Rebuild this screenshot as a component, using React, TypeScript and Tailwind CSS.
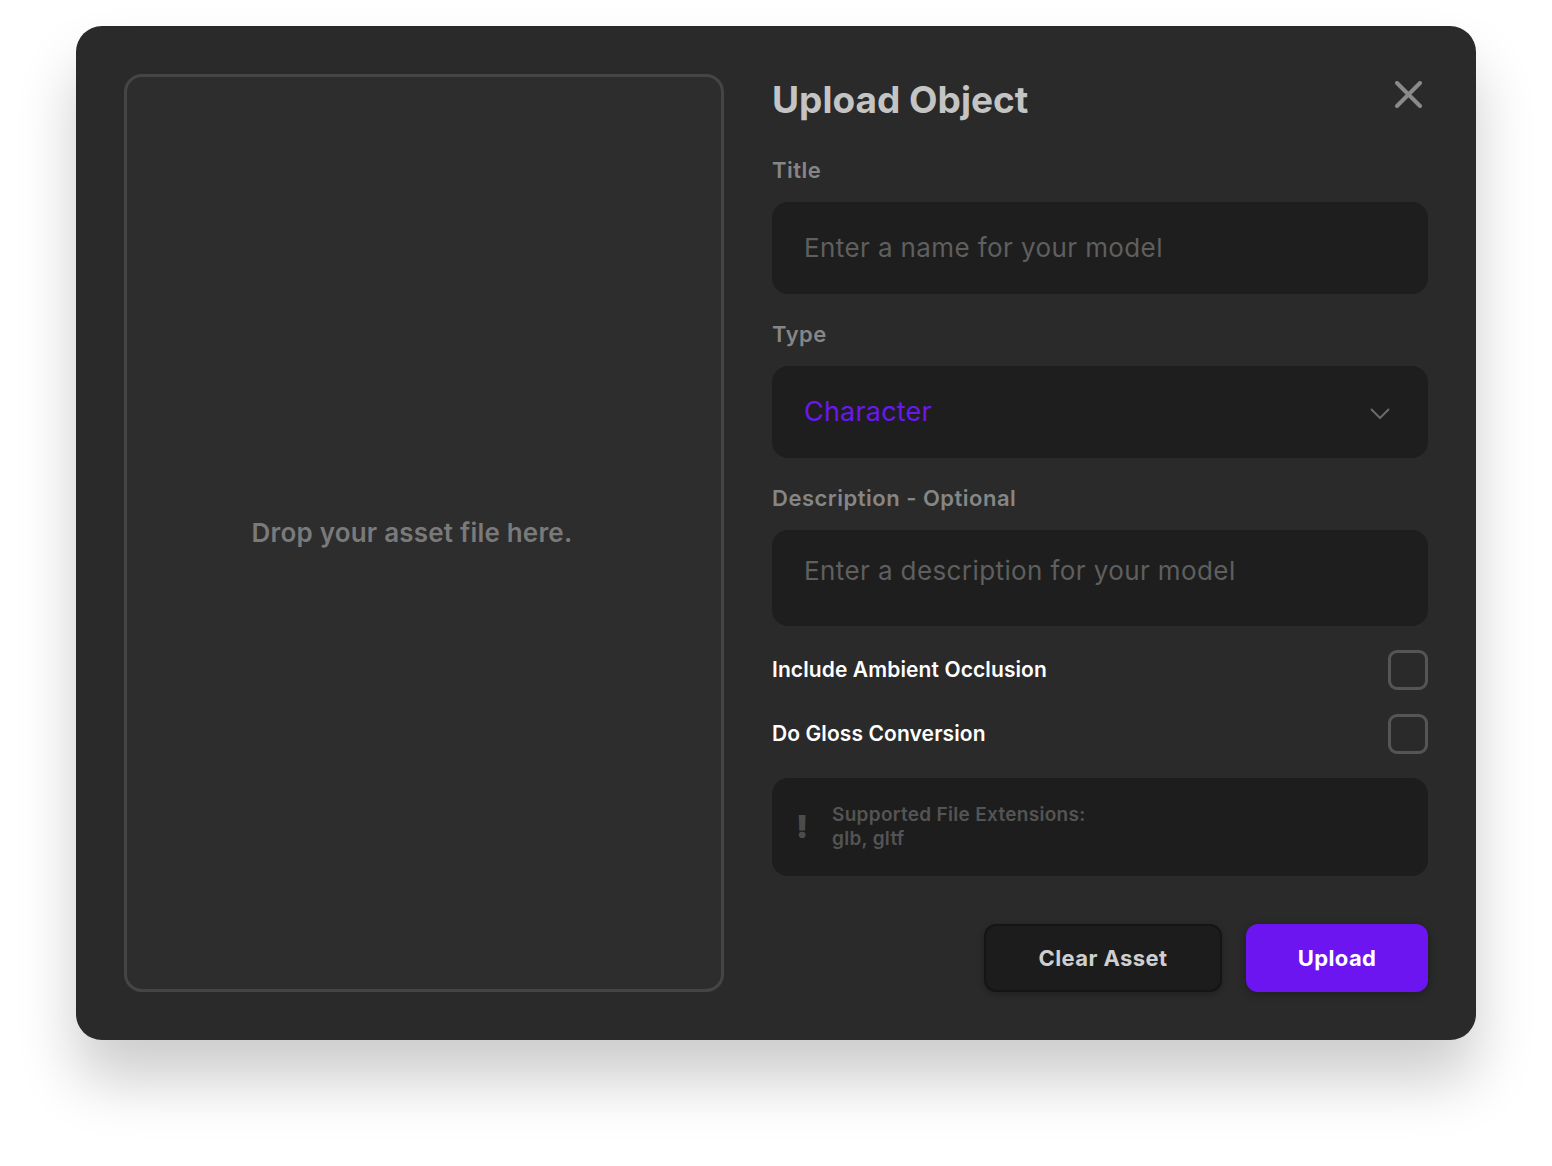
import * as React from "react"

const FONT = "font-['Inter','Lato','Liberation_Sans',sans-serif]"

function Checkbox({ label }: { label: string }) {
  const [checked, setChecked] = React.useState(false)
  return (
    <label className="flex h-10 cursor-pointer items-center justify-between">
      <span className="text-[21px] leading-[28px] font-semibold tracking-[0.1px] text-white">
        {label}
      </span>
      <button
        type="button"
        onClick={() => setChecked((v) => !v)}
        aria-pressed={checked}
        className="size-10 rounded-[9px] border-[3px] border-[#555555] bg-transparent"
      />
    </label>
  )
}

export default function App() {
  return (
    <div className={`min-h-[1166px] bg-white px-[76px] pt-[26px] ${FONT}`}>
      <div className="flex gap-12 rounded-[26px] bg-[#2a2a2a] p-12 shadow-[0_40px_60px_rgba(0,0,0,0.2)]">
        {/* drop zone */}
        <div className="flex h-[918px] w-[600px] shrink-0 items-center justify-center rounded-[18px] border-[3px] border-[#454545] bg-[#2d2d2d] pr-6">
          <span className="text-[26px] leading-[32px] font-semibold tracking-[0.2px] text-[#7a7a7a]">
            Drop your asset file here.
          </span>
        </div>

        {/* form */}
        <div className="flex w-[656px] flex-col">
          <div className="flex items-start justify-between">
            <h1 className="text-[37px] leading-[52px] font-bold text-[#c4c4c4]">
              Upload Object
            </h1>
            <button type="button" className="mt-[7px] mr-[6px] text-[#8a8a8a]" aria-label="Close">
              <svg width="27" height="27" viewBox="0 0 27 27" fill="none">
                <path
                  d="M2 2L25 25M25 2L2 25"
                  stroke="currentColor"
                  strokeWidth="4"
                  strokeLinecap="round"
                />
              </svg>
            </button>
          </div>

          <label className="mt-[30px] text-[22px] leading-[28px] font-semibold tracking-[0.5px] text-[#868686]">
            Title
          </label>
          <div className="mt-[18px] flex h-[92px] items-center rounded-[16px] bg-[#1e1e1e] px-8">
            <span className="text-[26px] leading-[32px] tracking-[0.4px] text-[#5f5f5f]">
              Enter a name for your model
            </span>
          </div>

          <label className="mt-[26px] text-[22px] leading-[28px] font-semibold tracking-[0.5px] text-[#868686]">
            Type
          </label>
          <div className="mt-[18px] flex h-[92px] items-center justify-between rounded-[16px] bg-[#1e1e1e] pr-[38px] pl-8">
            <span className="text-[27px] leading-[34px] tracking-[0.2px] text-[#6d17f0]">
              Character
            </span>
            <svg width="20" height="12" viewBox="0 0 20 12" fill="none" className="mt-1">
              <path
                d="M1.5 1.5L10 10L18.5 1.5"
                stroke="#6a6a6a"
                strokeWidth="2"
                strokeLinecap="round"
                strokeLinejoin="round"
              />
            </svg>
          </div>

          <label className="mt-[26px] text-[22px] leading-[28px] font-semibold tracking-[0.5px] text-[#868686]">
            Description - Optional
          </label>
          <div className="mt-[18px] h-[96px] rounded-[16px] bg-[#1e1e1e] px-8 pt-[25px]">
            <span className="text-[26px] leading-[32px] tracking-[0.4px] text-[#5f5f5f]">
              Enter a description for your model
            </span>
          </div>

          <div className="mt-6 flex flex-col gap-6">
            <Checkbox label="Include Ambient Occlusion" />
            <Checkbox label="Do Gloss Conversion" />
          </div>

          <div className="mt-6 flex h-[98px] items-center gap-[26px] rounded-[16px] bg-[#1d1d1d] pl-[24px]">
            <span className="w-[10px] text-center text-[32px] leading-none font-black text-[#4c4c4c]">
              !
            </span>
            <div className="text-[19px] leading-[24px] font-semibold tracking-[0.3px] text-[#545454]">
              <div>Supported File Extensions:</div>
              <div>glb, gltf</div>
            </div>
          </div>

          <div className="mt-12 flex justify-end gap-6">
            <button
              type="button"
              className="h-[68px] w-[238px] rounded-[12px] border-2 border-[#151515] bg-[#1c1c1c] text-[22px] font-bold tracking-[0.4px] text-[#cfcfcf] shadow-[0_2px_6px_rgba(0,0,0,0.25)]"
            >
              Clear Asset
            </button>
            <button
              type="button"
              className="h-[68px] w-[182px] rounded-[12px] bg-[#6c15f0] text-[22px] font-bold tracking-[0.4px] text-white shadow-[0_2px_8px_rgba(0,0,0,0.3)]"
            >
              Upload
            </button>
          </div>
        </div>
      </div>
    </div>
  )
}
